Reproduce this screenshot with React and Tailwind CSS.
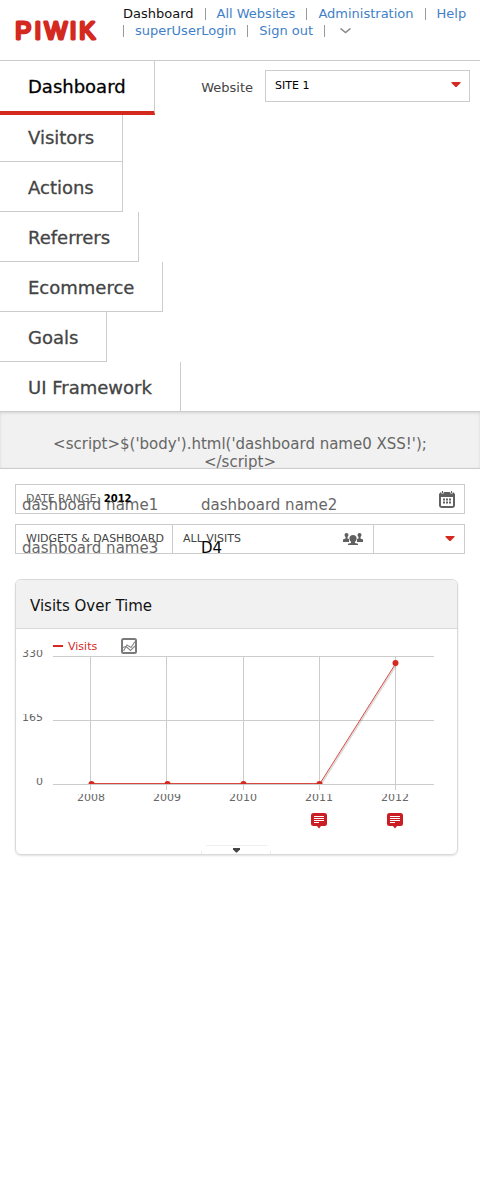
import React from "react";

const tabs = ["Visitors", "Actions", "Referrers", "Ecommerce", "Goals"];

const years = [
  { label: "2008", x: 75, grid: 74.5, y: 155, note: false },
  { label: "2009", x: 151, grid: 150.5, y: 155, note: false },
  { label: "2010", x: 227, grid: 227.5, y: 155, note: false },
  { label: "2011", x: 303, grid: 303.5, y: 155, note: true },
  { label: "2012", x: 379, grid: 379.5, y: 34, note: true },
];

const ticks = [
  { label: "330", y: 27.5 },
  { label: "165", y: 91.5 },
  { label: "0", y: 155.5 },
];

function Logo() {
  return (
    <svg width="90" height="30" viewBox="0 0 90 30" role="img" aria-label="Piwik" className="block">
      <text
        x="1.300 20.600 30.500 55.700 65.300"
        y="20.5"
        fontFamily="Liberation Sans, sans-serif"
        fontSize="24"
        fill="#d4291f"
        stroke="#d4291f"
        strokeWidth="2.900"
        strokeLinejoin="round"
      >
        PIWIK
      </text>
    </svg>
  );
}

function Arrow() {
  return (
    <svg width="10" height="6" viewBox="0 0 10 6" className="block shrink-0" aria-hidden="true">
      <path d="M0.5 0h9v1L5.500 5h-1L0.500 1z" fill="#d4291f" />
    </svg>
  );
}

function CalendarIcon() {
  return (
    <svg width="16" height="17" viewBox="0 0 16 17" className="block shrink-0" aria-hidden="true">
      <path d="M2 1h12l2 2v11a3 3 0 0 1-3 3H3a3 3 0 0 1-3-3V3z" fill="#606060" />
      <path d="M2 6h12v8.5a.5.5 0 0 1-.5.5h-11a.5.5 0 0 1-.5-.5z" fill="#fff" />
      <path d="M3.5 0v2.5M12.5 0v2.5" stroke="#fff" strokeWidth="2.4" />
      <path d="M3.5 0v2M12.5 0v2" stroke="#606060" strokeWidth="1" />
      <path d="M4 8.500h2M7 8.500h2M10 8.500h2M4 11.500h2M7 11.500h2M10 11.500h2" stroke="#606060" strokeWidth="2" />
    </svg>
  );
}

function PeopleIcon() {
  return (
    <svg width="20" height="12" viewBox="0 0 20 12" className="block shrink-0" fill="#606060" aria-hidden="true">
      <circle cx="3.500" cy="2" r="2" />
      <path d="M0 9V6.500l2.500-1V3h2v2.500L6 6v3z" />
      <circle cx="16.500" cy="2" r="2" />
      <path d="M20 9V6.500l-2.500-1V3h-2v2.500L14 6v3z" />
      <circle cx="10" cy="5.500" r="3.600" />
      <path d="M8 7h4v3l3 .8V12H5v-1.200l3-.8z" />
    </svg>
  );
}

function Note({ x }) {
  return (
    <g transform={`translate(${x} 184)`}>
      <path d="M2.500 0h11A2.500 2.500 0 0 1 16 2.500v8a2.500 2.500 0 0 1-2.500 2.500H10l-2 2.500L6 13H2.500A2.500 2.500 0 0 1 0 10.500v-8A2.500 2.500 0 0 1 2.500 0z" fill="#ca1d24" />
      <path d="M3 3.500h10M3 5.500h10M3 7.500h10M3 9.500h5" stroke="#fff" strokeWidth="1" />
    </g>
  );
}

function Chart() {
  const line = "M75 154.500H304L380 34";
  return (
    <svg viewBox="0 0 441 225" className="block w-full" fontFamily="DejaVu Sans, sans-serif" fontSize="11">
      <defs>
        <clipPath id="plot"><rect x="37" y="20" width="390" height="135" /></clipPath>
        <clipPath id="years"><rect x="37" y="165" width="400" height="12" /></clipPath>
        {ticks.map((t) => (
          <clipPath id={`tick${t.label}`} key={t.label}>
            <rect x="0" y={t.y - 6.5} width="36" height="14" />
          </clipPath>
        ))}
      </defs>

      <path d="M37 17h10" stroke="#d4291f" strokeWidth="2" />
      <text x="52" y="21" fill="#d4291f">Visits</text>

      <g transform="translate(105 9)" fill="none">
        <rect x="1" y="1" width="14" height="14" rx="1.500" stroke="#7a7a7a" strokeWidth="2" />
        <path d="M2.500 13L6 7l4 2.500L14 3.500" stroke="#8a8a8a" strokeWidth="1.200" />
        <path d="M2 9.500l3-1 4.500 4L14 8" stroke="#8a8a8a" strokeWidth="1.200" />
      </g>

      {ticks.map((t) => (
        <g key={t.label}>
          <path d={`M37 ${t.y}h381`} stroke="#ccc" />
          <text x="27" y={t.y + 0.5} textAnchor="end" fill="#666" clipPath={`url(#tick${t.label})`}>{t.label}</text>
        </g>
      ))}
      {years.map((p) => (
        <g key={p.label}>
          <path d={`M${p.grid} 27V161`} stroke="#ccc" />
          <text x={p.x} y="172" textAnchor="middle" fill="#666" clipPath="url(#years)">{p.label}</text>
        </g>
      ))}

      <g clipPath="url(#plot)">
        <path d={line} transform="translate(1 1)" fill="none" stroke="#000" strokeOpacity="0.15" strokeWidth="1.500" />
        <path d={line} fill="none" stroke="#d4291f" strokeWidth="1" strokeOpacity="0.85" />
        {years.map((p) => (
          <circle key={p.label} cx={p.x + 0.5} cy={p.y} r="3" fill="#d4291f" />
        ))}
      </g>
      {years.filter((p) => p.note).map((p) => <Note key={p.label} x={p.x - 8} />)}

      <path d="M190 216.500h62" stroke="#f0f0f0" />
      <path d="M185.500 222v3M254.500 222v3" stroke="#eee" />
      <path d="M217 219h7v1.500l-3 3h-1l-3-3z" fill="#444" />
    </svg>
  );
}

function Separator() {
  return <span className="h-3 w-px bg-[#999]" aria-hidden="true" />;
}

export default function App() {
  const link = "text-[#3f81c8]";
  const sub = "block text-[15px] leading-[18px] text-[#666]";
  return (
    <div className="min-h-screen bg-white font-['DejaVu_Sans',sans-serif] text-[#444]">
      <header className="flex h-[61px] border-b border-[#ccc] pr-2">
        <a href="#home" className="ml-[14px] mt-[18px] w-[109px] shrink-0">
          <Logo />
        </a>
        <nav className="mt-[5px] flex flex-wrap content-start items-center gap-x-[11px] text-[13px] leading-[17px]">
          <a href="#dashboard" className="text-[#111]">Dashboard</a>
          <Separator />
          <a href="#all" className={link}>All Websites</a>
          <Separator />
          <a href="#admin" className={link}>Administration</a>
          <Separator />
          <a href="#help" className={link}>Help</a>
          <Separator />
          <a href="#user" className={link}>superUserLogin</a>
          <Separator />
          <a href="#out" className={link}>Sign out</a>
          <Separator />
          <button type="button" aria-label="More" className="pl-1">
            <svg width="11" height="6" viewBox="0 0 11 6" fill="none" stroke="#888" strokeWidth="1.500">
              <path d="M0.500 0.500L5.500 4.500L10.500 0.500" />
            </svg>
          </button>
        </nav>
      </header>

      <div className="flex items-start justify-between pr-[10px]">
        <ul className="flex flex-col items-start text-[18px] leading-[51px]">
          <li className="relative h-[54px] border-b-4 border-r border-b-[#d4291f] border-r-[#ccc] px-7 text-black [-webkit-text-stroke:0.300px]">
            <a href="#dashboard">Dashboard</a>
          </li>
          {tabs.map((t) => (
            <li key={t} className="h-[50px] border-b border-r border-[#ccc] px-7 [-webkit-text-stroke:0.300px] nth-2:-mt-[3px]">
              <a href={`#${t}`}>{t}</a>
            </li>
          ))}
          <li className="h-[49px] border-r border-[#ccc] px-7 [-webkit-text-stroke:0.300px]">
            <a href="#ui">UI Framework</a>
          </li>
        </ul>
        <div className="mt-[9px] flex items-center gap-3">
          <label htmlFor="site" className="pt-1 text-[13px]">Website</label>
          <div className="relative">
            <select id="site" className="block h-8 w-[205px] appearance-none rounded-none border border-[#ccc] bg-white px-[9px] text-[11px] text-black">
              <option>SITE 1</option>
            </select>
            <span className="pointer-events-none absolute right-[9px] top-3"><Arrow /></span>
          </div>
        </div>
      </div>

      <nav className="h-[58px] border-y border-[#ccc] bg-[#f1f1f1] shadow-[inset_0_1px_3px_rgba(0,0,0,0.120)]">
        <ul className="flex flex-wrap gap-y-[25px] px-[22px] pt-[23px]">
          <li className="w-full text-center">
            <a href="#d0" className={sub}>{"<script>$('body').html('dashboard name0 XSS!');"}<br />{"</script>"}</a>
          </li>
          <li className="w-[179px]"><a href="#d1" className={sub}>dashboard name1</a></li>
          <li className="w-[179px]"><a href="#d2" className={sub}>dashboard name2</a></li>
          <li className="w-[179px]"><a href="#d3" className={sub}>dashboard name3</a></li>
          <li className="w-[179px]"><a href="#d4" className="block text-[15px] leading-[18px] text-black">D4</a></li>
        </ul>
      </nav>

      <main className="px-[15px] pt-[15px]">
        <button type="button" className="relative flex h-[30px] w-full items-center justify-between border border-[#ccc] px-[10px] pr-[9px] text-[11px] text-[#666]">
          <span>DATE RANGE: <b className="text-[10px] text-black">2012</b></span>
          <CalendarIcon />
        </button>

        <div className="relative mt-[10px] flex h-[30px] border border-[#ccc] text-[11px]">
          <button type="button" className="w-[157px] whitespace-nowrap border-r border-[#ccc] pl-[10px] text-left">WIDGETS &amp; DASHBOARD</button>
          <button type="button" className="flex flex-1 items-center justify-between border-r border-[#ccc] px-[10px]">
            ALL VISITS
            <PeopleIcon />
          </button>
          <button type="button" aria-label="Open menu" className="flex w-[90px] items-center justify-end pr-[9px]">
            <Arrow />
          </button>
        </div>

        <section className="mr-[7px] mt-[25px] rounded-md border border-[#d9d9d9] shadow-[0_1px_2px_rgba(0,0,0,0.120)]">
          <h2 className="h-[49px] rounded-t-md border-b border-[#d9d9d9] bg-[#f1f1f1] pl-[14px] pt-[3px] text-[15px] leading-[46px] text-[#111]">
            Visits Over Time
          </h2>
          <Chart />
        </section>
      </main>
    </div>
  );
}
